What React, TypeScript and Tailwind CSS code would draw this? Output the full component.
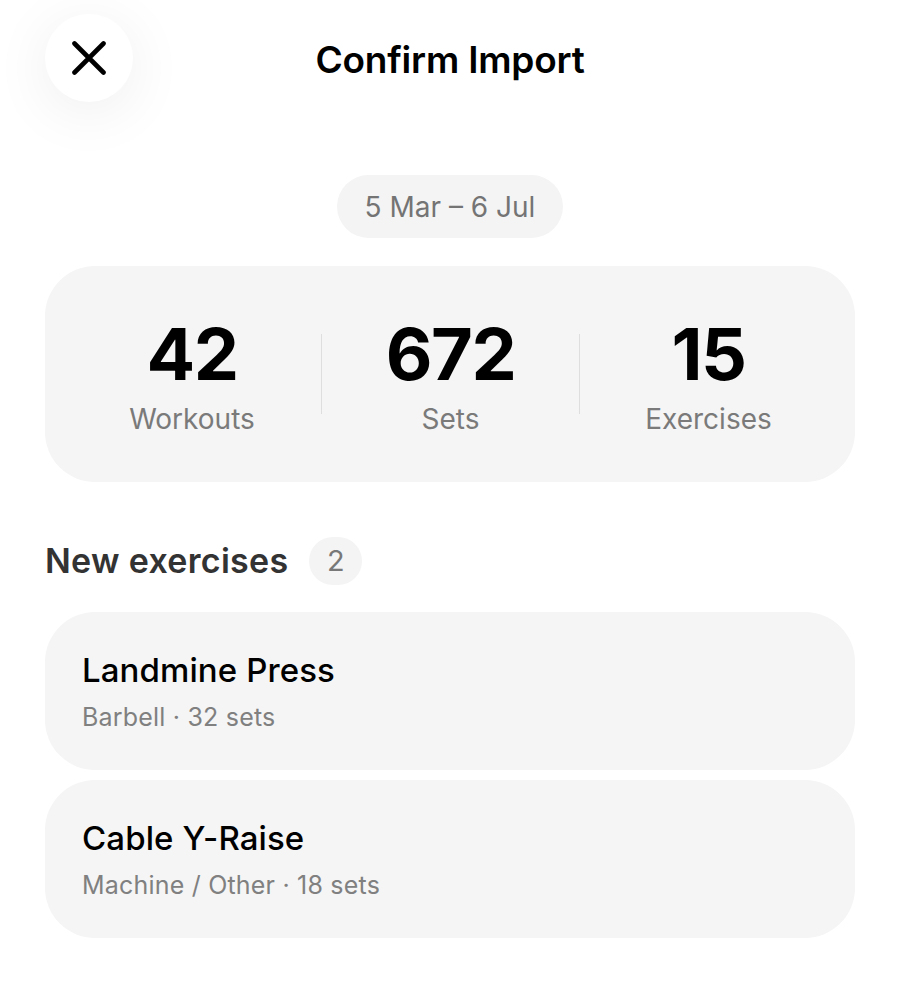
const stats = [
    { value: "42", label: "Workouts" },
    { value: "672", label: "Sets" },
    { value: "15", label: "Exercises" },
];

const newExercises = [
    { name: "Landmine Press", meta: "Barbell · 32 sets" },
    { name: "Cable Y-Raise", meta: "Machine / Other · 18 sets" },
];

function CloseIcon() {
    return (
        <svg width="34" height="34" viewBox="0 0 34 34" fill="none" stroke="currentColor" strokeWidth="4.6" strokeLinecap="round">
            <path d="M2.5 2.5 31.5 31.5M31.5 2.5 2.5 31.5" />
        </svg>
    );
}

export default function App() {
    return (
        <div className="min-h-[990px] w-[900px] bg-white font-['Inter',sans-serif] text-black">
            {/* Header */}
            <div className="flex items-center px-[45px] pt-[14px]">
                <button className="flex h-[88px] w-[88px] items-center justify-center rounded-full bg-white shadow-[0_10px_60px_rgba(0,0,0,0.07)]">
                    <CloseIcon />
                </button>
                <h1 className="flex-1 pt-[3px] text-center text-[37px] font-semibold tracking-[-0.2px]">Confirm Import</h1>
                <div className="w-[88px]" />
            </div>

            {/* Date range */}
            <div className="mt-[73px] flex justify-center">
                <span className="flex h-[63px] items-center rounded-full bg-[#f4f4f4] px-[28px] text-[28px] text-[#747474]">
                    5 Mar – 6 Jul
                </span>
            </div>

            {/* Summary */}
            <div className="mx-[45px] mt-[28px] flex h-[216px] items-center rounded-[50px] bg-[#f5f5f5] px-[18px]">
                {stats.map((s, i) => (
                    <div key={s.label} className="flex flex-1 items-center">
                        {i > 0 && <div className="h-[80px] w-px bg-[#dedede]" />}
                        <div className="flex flex-1 flex-col items-center pt-[6px]">
                            <span className="text-[72px] font-bold leading-[72px] tracking-[-1.5px]">{s.value}</span>
                            <span className="mt-[12px] text-[28px] leading-[34px] text-[#7a7a7a]">{s.label}</span>
                        </div>
                    </div>
                ))}
            </div>

            {/* New exercises */}
            <div className="mx-[45px] mt-[55px] flex h-[48px] items-center gap-[21px]">
                <h2 className="text-[34px] font-semibold leading-[48px] tracking-[0.3px] text-[#333333]">New exercises</h2>
                <span className="flex h-[48px] min-w-[53px] items-center justify-center rounded-full bg-[#f4f4f4] text-[29px] text-[#787878]">
                    2
                </span>
            </div>

            <div className="mx-[45px] mt-[27px] flex flex-col gap-[10px]">
                {newExercises.map((ex) => (
                    <div key={ex.name} className="flex h-[158px] flex-col justify-center rounded-[50px] bg-[#f5f5f5] px-[37px]">
                        <span className="text-[33px] font-medium leading-[40px] tracking-[0.1px]">{ex.name}</span>
                        <span className="mt-[12px] text-[25px] leading-[30px] tracking-[0.2px] text-[#808080]">{ex.meta}</span>
                    </div>
                ))}
            </div>
        </div>
    );
}
